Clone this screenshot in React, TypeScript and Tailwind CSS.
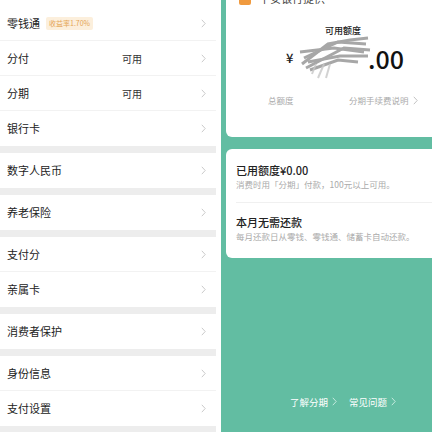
import React from "react";

const font = { fontFamily: '"Noto Sans CJK SC", "Noto Sans", sans-serif' };

function Chevron({ className = "" }: { className?: string }) {
  return (
    <svg width="5" height="9" viewBox="0 0 5 9" className={className}>
      <path d="M0.8 0.8 L4.2 4.5 L0.8 8.2" fill="none" stroke="currentColor" strokeWidth="0.9" />
    </svg>
  );
}

function Row({ label, right, badge, last }: { label: string; right?: string; badge?: string; last?: boolean }) {
  return (
    <div className={`relative flex h-[35px] items-center pl-[7px] pr-[10px] ${last ? "" : "border-b border-[#f2f2f2]"}`}>
      <span className="text-[11px] text-[#222]">{label}</span>
      {badge && (
        <span className="ml-[6px] rounded-[2px] bg-[#fcefdc] px-[3px] text-[7px] leading-[13px] text-[#e4a556]">{badge}</span>
      )}
      {right && <span className="absolute left-[122px] text-[10px] text-[#333]">{right}</span>}
      <Chevron className="ml-auto text-[#c4c4c4]" />
    </div>
  );
}

function Group({ children, top = false }: { children: React.ReactNode; top?: boolean }) {
  return <div className={`bg-white ${top ? "pt-[6px]" : ""}`}>{children}</div>;
}

export default function App() {
  return (
    <div className="flex h-[432px] w-[432px] overflow-hidden bg-white" style={font}>
      {/* left panel */}
      <div className="flex w-[216px] flex-col gap-[7px] bg-[#ededed]">
        <Group top>
          <Row label="零钱通" badge="收益率1.70%" />
          <Row label="分付" right="可用" />
          <Row label="分期" right="可用" />
          <Row label="银行卡" last />
        </Group>
        <Group>
          <Row label="数字人民币" last />
        </Group>
        <Group>
          <Row label="养老保险" last />
        </Group>
        <Group>
          <Row label="支付分" />
          <Row label="亲属卡" last />
        </Group>
        <Group>
          <Row label="消费者保护" last />
        </Group>
        <Group>
          <Row label="身份信息" />
          <Row label="支付设置" last />
        </Group>
      </div>
      <div className="w-[5px] bg-white" />
      {/* right panel */}
      <div className="flex flex-1 flex-col bg-[#62bda2] pl-[5px]">
        <div className="flex h-[137px] flex-col rounded-bl-[6px] bg-white">
          <div className="mt-[-10px] flex items-center pl-[13px]">
            <div className="h-[13px] w-[12px] rounded-[2px] bg-[#f09a3e]" />
            <span className="ml-[8px] text-[11px] text-[#444]">平安银行提供</span>
          </div>
          <div className="mt-[17px] pl-[28px] text-center text-[9px] font-medium text-[#222]">可用额度</div>
          <div className="relative mt-[5px] flex h-[32px] items-center justify-center">
            <span className="absolute left-[60px] text-[13px] font-medium text-[#222]">¥</span>
            <svg className="absolute left-[72px] top-[-8px]" width="76" height="46" viewBox="0 0 76 46">
              <g stroke="#8a8a8a" strokeWidth="3" opacity="0.75" fill="none">
                <path d="M4 30 L30 10 L52 6 L70 4" />
                <path d="M6 24 L40 8 L68 10" />
                <path d="M2 18 L36 14 L66 18" />
                <path d="M8 34 L46 14 L72 16" />
                <path d="M10 28 L42 22 L70 22" />
                <path d="M12 36 L40 26 L60 28" />
              </g>
              <g stroke="#c8c8c8" strokeWidth="2" opacity="0.8" fill="none">
                <path d="M14 40 L18 30" />
                <path d="M20 44 L26 30" />
                <path d="M28 44 L32 30" />
              </g>
            </svg>
            <span className="absolute left-[142px] text-[25px] font-medium leading-none text-[#111]">.00</span>
          </div>
          <div className="relative mt-[20px] h-[12px] text-[8.5px] text-[#aaa]">
            <span className="absolute left-[42px]">总额度</span>
            <span className="absolute left-[123px] flex items-center gap-[4px]">
              分期手续费说明
              <Chevron className="text-[#bbb]" />
            </span>
          </div>
        </div>
        <div className="mt-[12px] flex h-[109px] flex-col rounded-l-[6px] bg-white pl-[10px]">
          <div className="flex h-[54px] flex-col justify-center border-b border-[#f0f0f0] pt-[2px]">
            <div className="text-[11px] font-medium leading-[14px] text-[#222]">已用额度¥0.00</div>
            <div className="mt-[2px] text-[8.5px] leading-[11px] text-[#aaa]">消费时用「分期」付款，100元以上可用。</div>
          </div>
          <div className="flex flex-1 flex-col justify-center pb-[4px]">
            <div className="text-[11px] font-medium leading-[14px] text-[#222]">本月无需还款</div>
            <div className="mt-[2px] text-[8.5px] leading-[11px] text-[#aaa]">每月还款日从零钱、零钱通、储蓄卡自动还款。</div>
          </div>
        </div>
        <div className="mt-auto mb-[23px] flex justify-center gap-[12px] pl-[28px] text-[9.5px] text-white">
          <span className="flex items-center gap-[4px]">
            了解分期
            <Chevron className="text-[#cfeee4]" />
          </span>
          <span className="flex items-center gap-[4px]">
            常见问题
            <Chevron className="text-[#cfeee4]" />
          </span>
        </div>
      </div>
    </div>
  );
}
